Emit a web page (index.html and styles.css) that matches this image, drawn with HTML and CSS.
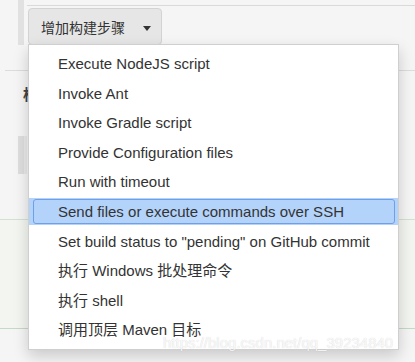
FILE: index.html
```html
<!DOCTYPE html>
<html lang="zh-CN">
<head>
  <meta charset="UTF-8">
  <title>增加构建步骤</title>
  <link rel="stylesheet" href="styles.css">
</head>
<body>
  <div class="page">
    <div class="step-top">
      <div class="rail"></div>
      <div class="step-body">
        <div class="step-edge"></div>
        <button class="add-btn">增加构建步骤 <span class="caret"></span></button>
      </div>
    </div>

    <div class="section-line"></div>
    <div class="section-title">构建后操作</div>
    <div class="handle"></div>
    <div class="green-box"></div>

    <ul class="menu">
      <li>Execute NodeJS script</li>
      <li>Invoke Ant</li>
      <li>Invoke Gradle script</li>
      <li>Provide Configuration files</li>
      <li>Run with timeout</li>
      <li class="active">Send files or execute commands over SSH</li>
      <li>Set build status to "pending" on GitHub commit</li>
      <li>执行 Windows 批处理命令</li>
      <li>执行 shell</li>
      <li>调用顶层 Maven 目标</li>
    </ul>

    <div class="watermark">https://blog.csdn.net/qq_39234840</div>
  </div>
</body>
</html>
```

FILE: styles.css
```css
html, body { margin: 0; padding: 0; }
body { font-family: "Liberation Sans", "Noto Sans CJK SC", sans-serif; background: #f5f5f5; color: #333; width: 415px; height: 362px; overflow: hidden; }
.page { position: relative; height: 362px; }

.step-top { display: flex; height: 45px; }
.rail { width: 6px; margin-left: 18px; background: #e1e1e1; }
.step-body { flex: 1; padding-left: 4px; }
.step-edge { height: 5px; border-bottom: 1px solid #d9d9d9; margin-left: -1px; }
.add-btn { margin-top: 2px; height: 37px; width: 134px; padding: 0 0 0 12px; text-align: left; font-family: inherit; font-size: 14px; color: #333; background: #e6e6e6; border: 1px solid #d3d3d3; border-radius: 4px; }
.caret { display: inline-block; width: 0; height: 0; margin-left: 14px; vertical-align: middle; border-left: 4px solid transparent; border-right: 4px solid transparent; border-top: 5px solid #333; }

.section-line { margin: 25px 0 0 5px; border-top: 1px solid #dcdcdc; }
.section-title { margin: 12px 0 0 23px; font-size: 15px; font-weight: bold; color: #444; height: 20px; white-space: nowrap; }
.handle { margin: 33px 0 0 18px; width: 6px; height: 38px; background: #dedede; box-shadow: 3px 0 0 #e9e9e9; }
.green-box { margin-top: 45px; height: 108px; background: #f3f6f0; border-top: 1px solid #d3e2d0; border-bottom: 1px solid #c4d9c6; }

.menu { position: absolute; left: 28px; top: 44px; width: 369px; margin: 0; padding: 4px 0; list-style: none; background: #fff; border: 1px solid #cfcfcf; box-shadow: 0 6px 14px rgba(0, 0, 0, 0.18); font-size: 15px; }
.menu li { position: relative; height: 29.6px; line-height: 29.6px; padding-left: 29px; white-space: nowrap; color: #333; }
.menu li.active { background: linear-gradient(#fff 0, #fff 1px, #b3d3fb 1px, #b3d3fb 28px, #fff 28px); }
.menu li.active::after { content: ""; position: absolute; left: 4px; right: 3px; top: 2px; bottom: 3px; border: 1.5px solid #6f9fe6; border-radius: 3px; }

.watermark { position: absolute; left: 163px; top: 334px; font-size: 15px; color: rgba(255, 255, 255, 0.85); text-shadow: 0 0 1px rgba(0, 0, 0, 0.2); }
```
